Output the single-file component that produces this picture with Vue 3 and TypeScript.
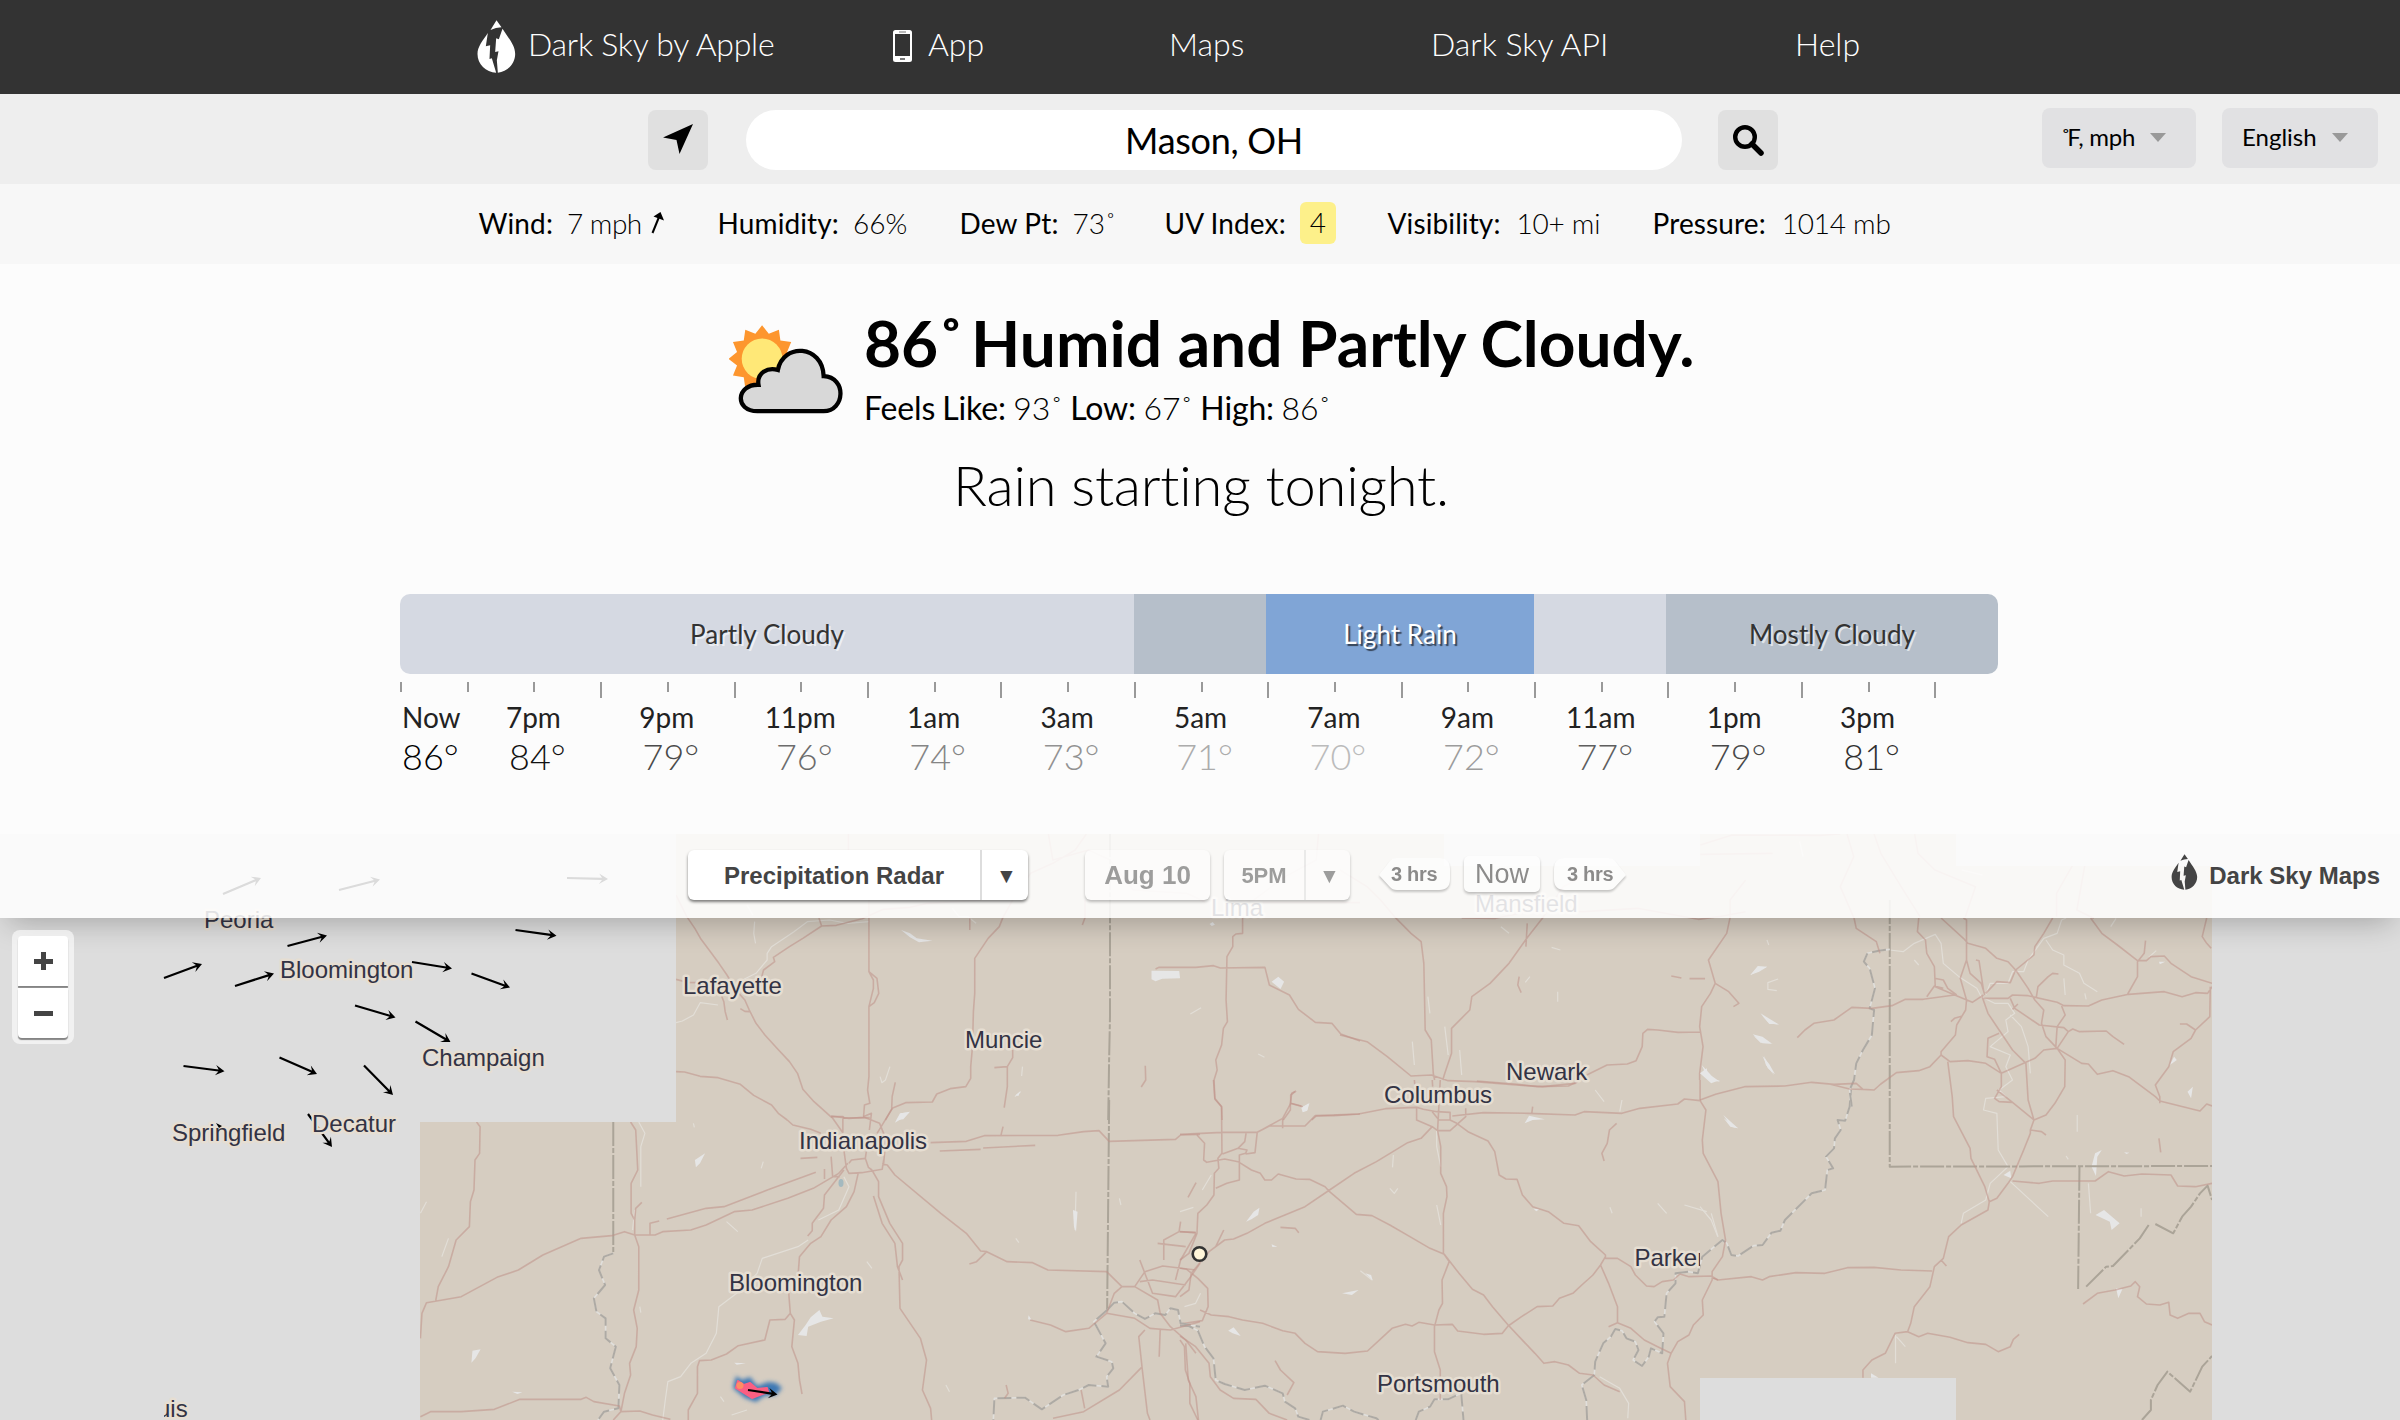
<script setup lang="ts">
interface Hour { label: string; temp: number; color: string }
interface Layer { t: string; roads: string; border?: string; river?: string; water?: string; blobs?: string }
interface City { name: string; x: number; y: number }

const details = [
  { k: 'Wind:', v: '7 mph', kind: 'wind' },
  { k: 'Humidity:', v: '66%', kind: '' },
  { k: 'Dew Pt:', v: '73˚', kind: '' },
  { k: 'UV Index:', v: '4', kind: 'uv' },
  { k: 'Visibility:', v: '10+ mi', kind: '' },
  { k: 'Pressure:', v: '1014 mb', kind: '' },
]

const hours: Hour[] = [
  { label: 'Now', temp: 86, color: '#000' },
  { label: '7pm', temp: 84, color: '#111' },
  { label: '9pm', temp: 79, color: '#4a4a4a' },
  { label: '11pm', temp: 76, color: '#6c6c6c' },
  { label: '1am', temp: 74, color: '#858585' },
  { label: '3am', temp: 73, color: '#929292' },
  { label: '5am', temp: 71, color: '#acacac' },
  { label: '7am', temp: 70, color: '#bbb' },
  { label: '9am', temp: 72, color: '#9c9c9c' },
  { label: '11am', temp: 77, color: '#5e5e5e' },
  { label: '1pm', temp: 79, color: '#484848' },
  { label: '3pm', temp: 81, color: '#303030' },
]

const layers: Layer[] = [
  {
    t: 'translate(660 820) scale(.44643 .33333)',
    roads: 'M36 225 60 290 78 325 92 358 110 390 132 430 150 465 170 510 190 540 200 570 215 610 235 645 262 685 290 725 308 760 320 808 345 845 385 893M720 240 600 250 560 262 500 268 453 296 395 316 362 318 320 355 290 380 254 412 257 425 232 450 228 470M356 294 362 318M468 240 468 455 478 480 478 505 468 560 468 770 465 810 470 850 458 855 456 890M468 455 486 475 490 520 480 548 468 560M694 295 694 330M768 293 760 320 735 355 705 415 705 520 702 575 700 680 696 740 696 775 685 800 650 806 620 822 610 846 550 848 520 865 505 900M527 787 520 830 519 865M790 690 790 713 778 740 778 800 771 863M778 740 749 743M36 478 60 487 80 488M130 500 143 545 146 575 151 600M180 566 190 574 202 575M36 755 55 756 90 769 130 773 180 793 210 826 250 855 265 880 285 900M1305 290 1305 340 1290 342 1283 350 1283 380 1270 410 1268 540 1271 605 1262 625 1258 675 1245 720 1248 750 1241 780 1243 838 1258 860 1259 900M1110 447 1118 442 1200 442 1240 437 1255 444 1355 442 1365 495 1410 525 1430 568 1468 607 1505 610 1525 642 1568 663M1087 737 1088 780 1078 801M952 240 952 293 946 315M1425 813 1415 820 1412 850 1440 860M1412 850 1412 870 1396 900M1460 900 1470 888 1510 887 1568 882M383 890 410 890 412 894 470 893M422 42 422 90M768 293 790 240 830 160 880 130 930 90 955 42M870 42 880 120 960 90 1008 120 1060 210 1180 220 1220 245M1330 240 1400 170 1470 120 1475 42M1350 248 1568 248',
    border: 'M1008 40 1008 590 1006 720 1004 900',
    water: 'M468 305 420 310 380 300 330 305 300 335 250 380 240 400 240 420 215 460 170 490M130 555 90 548 75 585 50 603 36 608M212 305 210 340 214 370M195 255 208 285M655 265 670 290 690 290 708 310M515 740 505 780 497 788 493 770M812 740 810 768M1188 582 1212 563M795 830 808 815M1340 702 1354 712',
    blobs: 'M1101 452 1163 453 1165 475 1125 476 1110 484 1101 478ZM1370 485 1385 470 1398 485 1390 507ZM540 330 560 340 575 355 610 362 580 367 560 352ZM1440 875 1437 862 1455 850 1450 870ZM530 900 540 880 560 875 545 898ZM1231 312 1238 306 1243 314 1236 318Z',
  },
  {
    t: 'translate(1340 820) scale(.67604 .33333)',
    roads: 'M0 150 40 200 60 240 82 293 105 340 120 365 124 430 126 630 135 660 138 760 140 780M380 150 330 200 300 293 278 350 250 430 222 490 195 530 192 570 165 625 165 700 155 760 152 780M277 310 275 380M265 470 263 495 268 518M600 180 577 240 577 293 572 340 545 420 555 490 548 520 535 560 532 620 537 680 532 760 532 780M555 490 575 515 590 550 582 560M533 636 500 637 470 630 455 628 448 640 447 680 438 722 425 732 395 735 365 765 348 790 300 800 260 795 200 785 160 782 135 765 105 768 70 710 40 665 0 645M180 294 230 295 290 270 360 275 440 265 530 298 560 290 600 275M490 468 505 474M517 476 540 476M533 103 640 100M533 75 580 45 710 46 740 42M750 42 760 110 740 200 760 293M790 42 800 100 830 200 858 290M850 42 855 100 880 150 940 200 925 290M1110 42 1060 220 1060 290M1110 42 1090 270 1115 295',
    water: 'M130 530 133 580M155 620 160 705M177 690 180 765M107 665 110 735M322 515 322 545M281 470 274 487M238 320 250 340M313 382 326 390M920 150 950 165M680 65 685 110',
    blobs: 'M607 465 618 438 632 440 620 455ZM622 580 648 612 635 612ZM612 648 640 672 622 668ZM627 708 642 765 630 735ZM535 735 550 768 562 785 545 780Z',
  },
  {
    t: 'translate(1180 1080) scale(.44643 .33333)',
    roads: 'M75 0 78 55 93 80 94 220 85 235 87 265 77 280 76 345 60 375 40 400 38 460 20 520 0 540M0 163 95 157 173 157 200 138 280 138 303 107 400 102 460 86 530 82 545 88 575 95M173 157 230 115 248 70 248 45 258 35M230 115 230 145M248 70 272 78M38 165 55 190 53 240 60 247 100 237 130 245 160 270 180 280 190 300 205 300 220 282 260 297 290 298 325 320 335 335 395 403 430 407 470 435 515 470 560 505 592 523M95 222 130 205 150 210 147 220 133 225 133 300 105 310 80 325M148 160 145 185 130 205M173 157 168 218 147 222M525 0 528 40M565 0 566 20M530 82 530 120 565 140 577 152 605 152 640 110 640 85M565 95 580 120 605 120 605 97 575 95M565 140 540 175 510 188 440 245 390 280 335 330 280 380 190 430 150 460 120 477 100 480 65 515 25 580 20 630 0 650M98 450 80 500M225 442 258 445 266 458M583 0 577 152 584 200 584 280 597 320 598 350 590 400 590 520 603 545 587 600 588 670 580 690 570 740 570 815 583 870 583 960M605 120 620 130 645 155 690 183 705 215 715 285 730 297 755 298 767 345 790 380 825 395 860 430 893 437 920 485 953 525 953 535 980 535 1010 560 1020 585 1045 618 1062 620 1080 605 1105 600 1120 582 1140 590 1190 588 1205 600M610 108 680 98 780 100 885 105 905 95 990 100 1030 85 1115 72 1130 57 1165 62M790 80 788 100M665 3 750 12 800 20 870 18 885 8M592 523 625 580 655 628 680 645 700 680 735 735 770 785 795 820 815 850 840 845 870 855 895 880 925 885 950 915 985 935M735 738 765 710 800 680 835 678 850 655 880 640 900 615 925 585 942 555 953 530M942 555 960 610 980 680 980 728M960 740 980 728 1010 745 1040 780 1070 800 1100 820M978 130 962 150 957 190 945 220 950 243M45 690 70 705 110 710 140 720 185 730 230 752 258 760 280 790 308 815 370 820 420 813 455 770 475 745 505 733 520 738 535 727 570 735 610 733 622 753 680 763 722 760 735 738M0 565 15 568 40 595 62 625 63 680 50 722 0 732M0 455 35 458M36 308 18 352M0 768 35 800 65 850 68 890 90 930 120 955 170 958 200 1000 240 1020M0 780 10 800 12 870 22 910 22 970 40 1020M213 842 225 870 255 908 240 945M1165 0 1165 62 1178 90 1170 180 1172 220 1205 305 1212 400 1222 480 1215 530 1192 575 1192 600 1170 660 1172 705 1150 735 1140 765 1115 785 1100 820 1092 850 1098 920 1130 965 1133 1020',
    river: 'M0 737 20 738 40 752 55 800 75 835 80 900 100 912 145 930 190 917 230 940 235 965 258 985 265 1010 290 1020M315 1020 320 995 365 977 390 995 440 1015 445 1020M528 1020 535 995 560 980 570 958 600 958 630 940 635 1020M912 1020 910 960 900 915 928 885 930 845 948 790 965 770 975 747 990 752 1000 775 1020 785 1027 810 1015 840 1035 858 1050 830 1055 805 1080 820 1083 760 1063 725 1070 712 1085 710 1090 640 1110 610 1110 580 1140 575 1160 580 1170 530 1215 480 1225 490 1235 525 1250 528 1285 497 1305 495 1325 458 1345 452 1355 420 1415 340 1445 330 1450 270 1463 265 1447 230 1465 205 1467 175 1480 150 1473 120 1490 122 1500 80 1503 30',
    water: 'M575 152 575 200 584 260M575 375 584 435M478 225 476 262M404 572 430 600M0 395 30 382M70 285 50 330M46 640 35 670 10 680M940 890 985 925 1005 970 1003 1015M1070 370 1090 400M1130 375 1180 395M1190 400 1205 470M963 382 968 400M930 30 950 65M990 60 985 95M470 325 480 340 488 325',
    blobs: 'M272 85 288 70 285 92 275 97ZM772 130 782 107 817 118 790 120ZM148 425 165 395 178 383 175 405 160 418ZM363 640 400 630 385 645ZM108 752 120 742 136 768 118 760ZM415 580 428 585 432 602ZM1217 105 1250 145 1235 140ZM205 493 218 500 207 501ZM792 386 805 388 798 394Z',
  },
  {
    t: 'translate(400 1080) scale(.5102 .33333)',
    roads: 'M150 126 157 140 156 220 147 240 145 330 138 365 136 440 110 480 95 560 75 620 70 662M40 775 43 700 52 668 120 650 190 592 232 570 280 525 355 475 415 467 440 455 460 465 500 465 515 455 570 450 600 435 655 395 690 390 760 355 810 325 860 280 878 250M523 417 600 385 635 380 720 330 815 277M490 465 490 430 508 423M452 126 462 150 466 270 453 310 453 400 460 420 460 465 468 500 468 630 458 690 465 745 463 800 450 850 452 885 440 940 433 995 418 1020M40 1010 60 995 120 995 185 988 235 958 355 958 365 952 380 965 430 978 433 995 470 993 495 1005 530 1018M474 367 462 385 460 420M759 120 770 135 805 148 825 160M845 108 880 115 910 112 940 130 948 160 952 180 948 250M845 108 868 158M868 112 868 158M908 110 924 100 920 150M965 85 935 160M1040 188 1110 184 1145 167 1290 166 1340 155 1370 152 1390 184 1520 178 1530 165 1568 163M1058 213 1138 208M1143 204 1245 196M1182 140 1178 165M785 235 818 232M845 230 848 290 862 290M832 267 832 297M870 210 875 265 880 280 905 278 945 268 948 240M880 250 885 240 912 235 914 215M912 235 918 262 925 270M898 280 890 335 875 380 845 420 825 470 805 490 783 530 780 590 762 640 765 700 755 718 725 720 715 780 663 797 640 822 610 840 587 842 583 860 583 940 565 990 565 1020M870 270 832 345 830 385 808 430 808 452 799 468M765 700 773 720 768 800 780 850 783 900 788 942M925 270 938 305 938 350 960 430 985 490 985 540 978 560 980 685 1020 775 1032 840 1024 930 1040 985 1042 1020M928 348 945 430 970 490 975 560 985 600M945 252 955 255 970 285 1060 400 1110 460 1138 513 1150 515 1190 545 1240 548 1270 570 1385 575 1415 620 1440 620M1150 515 1130 545 1116 552M1440 620 1460 575 1495 558 1560 570M1450 605 1475 600 1540 615M1440 620 1485 660 1490 700 1510 740 1540 780 1560 820M1450 540 1465 600 1475 640 1520 650 1550 590 1568 550M1385 700 1440 715 1470 745 1510 750 1568 725M1490 750 1488 830M1460 750 1448 770 1455 870 1465 1000 1470 1020M1235 720 1275 735 1305 755 1350 745 1385 700 1400 640 1415 620M1530 425 1527 455 1497 480 1497 540M1527 455 1560 458M1485 490 1540 500M1520 600 1530 540 1560 460M1455 860 1410 930 1340 995 1280 1015M1540 790 1545 900 1560 950 1565 1020M1188 915 1192 940 1185 955M1335 930 1342 985',
    border: 'M418 126 418 520M1390 60 1386 690',
    river: 'M418 520 400 530 390 570 402 615 380 655 385 695 403 715 403 775 423 800 412 865 430 915 428 985 400 995 388 1020M1386 690 1360 725 1383 790 1365 830 1395 845 1398 865 1385 890 1388 920 1350 915 1330 930 1300 945 1258 988 1225 953 1165 955 1163 1020M1386 690 1400 668 1415 665 1440 700 1460 717 1480 700 1500 705 1510 685 1525 690 1530 730 1568 740',
    water: 'M468 126 480 160 472 200 472 320M460 390 456 450M870 290 880 320 860 390 820 420M800 480 780 500 710 535 700 580 660 640 625 680 620 760 600 820 570 850 550 890 525 905 520 960 515 1020M650 1005 680 990M40 400 52 365M82 530 95 475M1325 335 1323 450M1410 355 1413 375M640 425 662 455M712 245 708 265M915 545 925 565M575 130 577 142M470 680 472 698M1207 475 1213 488M1070 915 1077 935M628 950 635 965',
    blobs: 'M580 262 578 240 598 220 588 250ZM970 128 980 100 998 97 985 115ZM780 765 795 735 805 712 822 690 828 710 850 715 825 725 800 740 797 768ZM140 848 142 812 158 808 148 835ZM220 935 240 937 230 942ZM655 848 678 850 660 854ZM1206 46 1216 34 1212 48ZM1319 390 1328 395 1325 455 1321 440ZM1232 706 1238 720 1231 718Z',
  },
  {
    t: 'translate(1700 900) scale(.44643 .33333)',
    roads: 'M0 600 35 583 100 560 190 558 250 547 300 553 350 550 365 568 390 570 405 552 440 518 490 512 515 500 540 465 540 455 572 405 575 375 595 330 597 300 583 235 597 180 597 60 590 54M290 552 335 567 365 568M218 413 235 390 255 370 300 360 340 322 385 325 430 317 460 298 500 298 570 285M345 54 350 85 395 125 403 160M490 54 487 95 505 120 508 160 525 200 527 260 580 290 610 307 635 285M508 290 525 258 545 265M525 235 545 240 555 265 575 285M540 54 590 115 600 130 640 145 665 175 690 185 707 210 735 265 750 300 770 330 765 370 775 410 800 445M618 180 625 182 635 270M597 180 605 220 630 250 638 285M790 54 770 100 750 140 748 165 707 210 695 248 665 245 640 280M635 295 690 295 700 285 735 287 800 307 815 317 870 318 900 300 960 283 1040 275 1080 290 1110 278 1137 280 1147 260M875 54 900 100 935 135 980 182 1000 182 1010 170 1040 168 1055 190 1100 230 1147 250M998 122 995 160 980 185 980 230 958 282M1135 54 1125 110 1135 130 1145 145M753 295 757 260 780 230 790 220 803 222M1143 260 1142 350 1110 390 1100 415 1060 455 1050 500 1020 555 1030 590 1030 610M1110 390 1090 372 1075 372M810 318 818 345 800 380 797 440M695 295 705 325 760 375 815 383 825 395 835 387 850 395 910 393 925 410 950 433M700 328 712 312M825 395 800 445M800 445 855 490 870 492 890 523 925 512 960 530 1020 590 1030 603 1120 633 1135 612 1147 618M800 445 818 480 817 560 795 610 775 645 748 660 740 690 740 700 725 750 700 830 690 850 665 895 648 905 645 930 585 975 557 1010 545 1075 525 1100 515 1160 480 1220 472 1270 465 1295 437 1300 415 1360 385 1380 365 1410 365 1433M800 445 770 450 750 475 675 520 640 490 600 482 560 485 540 465M555 485 565 590 568 650 605 745 607 775 638 860 648 905M632 290 645 340 670 390 700 450 730 490 735 600 748 660M562 365 570 355 588 348M670 400 645 415 643 470 660 478 675 520 675 560 660 595 670 605 700 607M665 570 700 607 748 660M740 690 765 695 775 705M700 843 760 850 790 843 885 843 915 815 950 828 990 822 1055 825 1070 858 1110 860 1147 850M30 1135 40 1140 115 1130 140 1140 155 1130 215 1118 280 1120 330 1103 390 1102 450 1110 520 1113M540 1080 552 1098M465 1295 490 1310 510 1300 560 1312 600 1328 640 1333 668 1355 695 1340 702 1318 715 1303M858 1212 890 1180 930 1170 965 1158 975 1145 985 1160 980 1190 1000 1212 1030 1215 1050 1207 1053 1245 1070 1255 1095 1240 1120 1240 1130 1265 1147 1275M1028 715 1032 757',
    border: 'M425 0 425 800 1147 798M850 800 847 1167M865 1160 910 1100 925 1098 960 1050 985 1015 1005 975M1020 972 1060 1000 1080 950 1100 920 1120 880 1137 857 1147 900M990 1560 1010 1530 1010 1500 1025 1455 1047 1415 1098 1475 1125 1400 1147 1368',
    river: 'M340 620 335 570 345 540 350 490 365 450 385 405 390 330 380 325 392 265 380 205 367 185 375 160 400 152 425 148',
    water: 'M425 150 455 155 480 130 527 103 540 130 545 190 580 230 620 265 630 290 660 310 690 310 705 340 685 360 690 395 650 440 695 465 685 500 700 540 670 570 685 590 640 595 635 630 665 640 668 750 690 800 650 850 640 900 590 940 585 970M640 285 650 250 690 250 700 215 725 215 735 180 770 115 800 100 810 60 820 54M775 120 790 150 815 165 815 195 850 220 860 250 890 275M695 345 720 380 735 440 740 520M695 845 780 950M175 237 152 248 152 268 172 272M150 120 154 135M815 235 818 285M480 180 490 195M862 280 865 298M920 80 932 55M1005 172 1022 152M988 925 988 950M870 850 875 940M845 645 845 695M438 1305 438 1390M440 1310 460 1340M0 920 25 960 40 1010M820 768 825 778',
    blobs: 'M113 225 128 203 150 200 130 213ZM138 345 155 362 178 375 155 370ZM118 403 140 410 160 430 140 430ZM140 468 155 492 168 523 152 505ZM0 520 15 505 20 540 45 540 25 550ZM53 655 85 685 68 680ZM886 945 905 930 940 970 922 990 918 965ZM877 800 885 760 900 750 890 770 887 828ZM932 1165 946 1168 937 1195ZM1052 495 1062 470 1068 480 1058 490ZM1092 575 1104 560 1100 595ZM1028 185 1042 185 1030 193ZM680 825 695 812 697 835ZM950 757 962 758 955 762ZM383 1420 400 1433 383 1433Z',
  },
]

const cities: City[] = [
  { name: 'Peoria', x: 204, y: 928 },
  { name: 'Bloomington', x: 280, y: 978 },
  { name: 'Champaign', x: 422, y: 1066 },
  { name: 'Springfield', x: 172, y: 1141 },
  { name: 'Decatur', x: 312, y: 1132 },
  { name: 'Lafayette', x: 683, y: 994 },
  { name: 'Muncie', x: 965, y: 1048 },
  { name: 'Lima', x: 1211, y: 916 },
  { name: 'Mansfield', x: 1475, y: 912 },
  { name: 'Newark', x: 1506, y: 1080 },
  { name: 'Columbus', x: 1384, y: 1103 },
  { name: 'Indianapolis', x: 799, y: 1149 },
  { name: 'Bloomington', x: 729, y: 1291 },
  { name: 'Portsmouth', x: 1377, y: 1392 },
]

// tail x, tail y, head x, head y
const winds: number[][] = [
  [223, 894, 261, 878], [339, 890, 380, 879.5], [567, 878, 608, 879],
  [287.5, 946, 327, 935.5], [164, 978, 202, 964], [235, 986, 274, 973.5],
  [412, 962, 452, 968.5], [471.5, 973.5, 510, 987.5], [515.5, 930, 556.5, 935.8],
  [355, 1005.5, 395.5, 1017.5], [415.5, 1021.5, 450.5, 1042], [183.5, 1066, 224.5, 1071.3],
  [279.5, 1057.5, 317, 1074], [364, 1065.5, 393, 1095], [308, 1114, 332, 1147],
  [748, 1390, 777.5, 1394.5],
]

function windPath(w: number[]): string {
  const [x1, y1, x2, y2] = w
  const len = Math.hypot(x2 - x1, y2 - y1)
  return `M${-len} -1.1H-6L-9 -5.2L0 0L-9 5.2L-6 1.1H${-len}Z`
}
function windTransform(w: number[]): string {
  const [x1, y1, x2, y2] = w
  return `translate(${x2} ${y2}) rotate(${(Math.atan2(y2 - y1, x2 - x1) * 180) / Math.PI})`
}

const sun = Array.from({ length: 24 }, (_, i) => {
  const r = i % 2 ? 25.5 : 33
  const a = (i * Math.PI) / 12
  return `${(32.5 + r * Math.sin(a)).toFixed(1)},${(34 - r * Math.cos(a)).toFixed(1)}`
}).join(' ')
</script>

<template>
  <div class="page">
    <nav class="nav">
      <a class="brand">
        <svg class="drop" viewBox="22 29 116 159"><path d="M80 30 95 51Q78 52 62 59ZM54 68C40 90 23 108 23 131 23 162 48 186 79 187L66 144 59 146 61 105 48 108ZM98 55C115 82 136 105 136 131 136 160 112 185 84 187L81 150 86 123 76 125 79 84 87 87Z" /></svg>
        <span>Dark Sky by Apple</span>
      </a>
      <a class="app">
        <svg class="phone" viewBox="0 0 19 32"><path fill-rule="evenodd" d="M2.500 0h14Q19 0 19 2.500v27Q19 32 16.500 32h-14Q0 32 0 29.500v-27Q0 0 2.500 0ZM2 4v22h15V4Z" /><path class="dim" d="M7 28h5v2H7zM6 1.500h7v1H6z" /></svg>
        <span>App</span>
      </a>
      <a>Maps</a>
      <a>Dark Sky API</a>
      <a>Help</a>
    </nav>

    <div class="search">
      <button class="sq"><svg viewBox="0 0 60 60"><path d="M45 14 15 27.500 28.500 30 31.500 44Z" /></svg></button>
      <div class="field">Mason, OH</div>
      <button class="sq"><svg viewBox="0 0 60 60"><circle cx="27" cy="27" r="9.800" /><path class="handle" d="M34 34 43 43" /></svg></button>
      <div class="select units"><span><u>˚</u>F, mph</span><i></i></div>
      <div class="select lang"><span>English</span><i></i></div>
    </div>

    <div class="details">
      <div v-for="d in details" :key="d.k" class="detail">
        <b>{{ d.k }}</b><span :class="{ uv: d.kind === 'uv' }">{{ d.v }}</span>
        <svg v-if="d.kind === 'wind'" viewBox="0 0 13 22"><path d="M1.500 21 8 5" /><path class="tip" d="M9.500 0 13 8.500 2.500 4.500Z" /></svg>
      </div>
    </div>

    <main class="main">
      <div class="current">
        <svg class="sky" viewBox="0 0 112 90">
          <polygon :points="sun" fill="#fd962e" />
          <circle cx="32.500" cy="34" r="20" fill="#ffe877" />
          <path d="M28 85.500C5 85.500 7 59 29 59.500 27 48 38 42 48 45 53 18 92 20 93 51 116 52 114 85.500 93 85.500Z" fill="#d8d8d8" stroke="#000" stroke-width="4.200" />
        </svg>
        <div>
          <h1>86<u>˚</u> Humid and Partly Cloudy.</h1>
          <p class="feels"><b>Feels Like:</b> 93<u>˚</u> <b>Low:</b> 67<u>˚</u> <b>High:</b> 86<u>˚</u></p>
        </div>
      </div>
      <p class="summary">Rain starting tonight.</p>

      <section class="timeline">
        <div class="bar">
          <span class="pc">Partly Cloudy</span><span class="mc"></span><span class="rain">Light Rain</span><span class="pc"></span><span class="mc">Mostly Cloudy</span>
        </div>
        <div class="ticks"><i v-for="n in 24" :key="n" :class="{ long: n > 3 && n % 2 === 0 }"></i></div>
        <div class="hours">
          <div v-for="h in hours" :key="h.label" class="hour">
            <span>{{ h.label }}</span>
            <em :style="{ color: h.color }">{{ h.temp }}°</em>
          </div>
        </div>
      </section>
    </main>

    <section class="map">
      <svg class="canvas" viewBox="0 834 2400 586">
        <defs>
          <clipPath id="land"><path d="M676 834H1444V866H1700V834H1956V866H2212V1420H1956V1378H1700V1420H420V1122H676Z" /></clipPath>
          <clipPath id="east"><rect x="1600" y="1200" width="100" height="100" /></clipPath>
          <clipPath id="west"><rect x="164" y="1380" width="60" height="40" /></clipPath>
          <filter id="soft" x="-30%" y="-30%" width="160%" height="160%"><feGaussianBlur stdDeviation="2.200" /></filter>
        </defs>
        <rect y="834" width="2400" height="586" fill="#ddd" />
        <g clip-path="url(#land)">
          <rect y="834" width="2400" height="586" fill="#d6cdc1" />
          <g v-for="(l, i) in layers" :key="i" :transform="l.t">
            <path v-if="l.water" class="water" :d="l.water" />
            <path v-if="l.blobs" class="blob" :d="l.blobs" />
            <path v-if="l.border" class="border" :d="l.border" />
            <path v-if="l.river" class="bank" :d="l.river" />
            <path v-if="l.river" class="river" :d="l.river" />
            <path class="road" :d="l.roads" />
          </g>
        </g>
        <path d="M733 1388 736 1376 742 1380 750 1377 757 1386 768 1382 776 1383 782 1388 776 1395 764 1396 756 1402 745 1398Z" fill="#3c78b4" filter="url(#soft)" />
        <path d="M736 1388 738 1381 744 1385 750 1383 757 1389 767 1388 768 1392 757 1396 752 1398Z" fill="#fb5f82" stroke="#fb5f82" stroke-width="2" stroke-linejoin="round" />
        <circle cx="740" cy="1385.500" r="3.500" fill="#ff8d63" />
        <ellipse cx="841" cy="1183" rx="2.500" ry="4" fill="#8fb0bd" opacity=".7" />
        <path v-for="(w, i) in winds" :key="i" :d="windPath(w)" :transform="windTransform(w)" />
        <text v-for="c in cities" :key="c.name + c.x" class="city" :x="c.x" :y="c.y">{{ c.name }}</text>
        <path d="M216 1123 222 1126 219 1128Z" />
        <g clip-path="url(#east)"><text class="city" x="1634.500" y="1266">Parker</text></g>
        <g clip-path="url(#west)"><text class="city" x="157" y="1417">uis</text></g>
        <circle cx="1199.500" cy="1254" r="6.800" fill="#fff6d9" stroke="#333" stroke-width="2.600" />
      </svg>

      <div class="toolbar">
        <div class="split radar"><span>Precipitation Radar</span><span>▼</span></div>
        <div class="split date"><span>Aug 10</span></div>
        <div class="split time"><span>5PM</span><span>▼</span></div>
        <svg class="step back" viewBox="0 0 72 36"><path d="M0 17 11 3Q13.500 0 18 0H60Q71 0 71 11V21Q71 32 60 32H18Q13.500 32 11 29Z" /><text x="12" y="23">3 hrs</text></svg>
        <div class="now">Now</div>
        <svg class="step fwd" viewBox="0 0 72 36"><path d="M72 17 61 3Q58.500 0 54 0H11Q0 0 0 11V21Q0 32 11 32H54Q58.500 32 61 29Z" /><text x="13" y="23">3 hrs</text></svg>
        <div class="logo">
          <svg viewBox="22 29 116 159"><path d="M80 30 95 51Q78 52 62 59ZM54 68C40 90 23 108 23 131 23 162 48 186 79 187L66 144 59 146 61 105 48 108ZM98 55C115 82 136 105 136 131 136 160 112 185 84 187L81 150 86 123 76 125 79 84 87 87Z" /></svg>
          <span>Dark Sky Maps</span>
        </div>
      </div>
      <div class="zoom"><button><i class="plus"></i></button><button><i></i></button></div>
    </section>
  </div>
</template>

<style>
body { margin: 0; }
</style>

<style scoped>
.page { width: 2400px; height: 1420px; overflow: hidden; background: #fcfcfc; font-family: Lato, sans-serif; font-variant-ligatures: none; color: #000; display: flex; flex-direction: column; }
h1, p { margin: 0; }
button { border: 0; padding: 0; }
u { text-decoration: none; margin-right: -.13em; }

.nav { height: 94px; flex: none; background: #333; color: #fff; font-weight: 300; font-size: 32px; line-height: 87px; display: grid; grid-template-columns: 416px 276px 262px 364px 200px; padding-left: 477px; box-sizing: border-box; white-space: nowrap; }
.brand, .app { display: flex; }
.brand span { letter-spacing: -.25px; }
.drop { width: 39px; height: 53px; margin: 20px 12px 0 0; fill: #fff; }
.phone { width: 19px; height: 32px; margin: 30px 16px 0 0; fill: #fff; }
.phone .dim { fill: #777; }

.search { height: 90px; flex: none; background: #eee; display: flex; padding: 16px 22px 0 648px; box-sizing: border-box; }
.sq { width: 60px; height: 60px; border-radius: 8px; background: #e0e0e0; }
.sq svg { width: 60px; height: 60px; display: block; }
.sq circle { fill: none; stroke: #000; stroke-width: 4.4; }
.sq .handle { stroke: #000; stroke-width: 5.5; stroke-linecap: round; }
.field { width: 936px; height: 60px; margin: 0 36px 0 38px; border-radius: 30px; background: #fff; text-align: center; font-size: 36px; letter-spacing: -.3px; line-height: 60px; }
.select { height: 60px; margin-top: -2px; border-radius: 8px; background: #e1e1e3; display: flex; align-items: center; font-size: 24px; line-height: 54px; box-sizing: border-box; padding: 0 30px 2px 20px; justify-content: space-between; white-space: nowrap; }
.select i { border: 8px solid transparent; border-top: 9px solid #999; border-bottom: 0; }
.units { width: 154px; margin-left: auto; padding-left: 19px; }
.units span { letter-spacing: -.3px; }
.lang { width: 156px; margin-left: 26px; }

.details { height: 80px; flex: none; background: #f7f7f7; display: grid; grid-template-columns: 239px 242px 205px 223px 265px 260px; padding-left: 478.500px; font-size: 28px; line-height: 78px; white-space: nowrap; }
.detail { display: flex; font-weight: 300; }
.detail b { font-weight: 400; letter-spacing: .12px; margin-right: 14px; }
.detail:first-child span { letter-spacing: -.5px; }
.detail:nth-child(n + 5) b { margin-right: 16px; }
.detail:nth-child(n + 5) span { letter-spacing: -.25px; }
.detail svg { width: 13px; height: 22px; margin: 28px 0 0 9px; overflow: visible; }
.detail path { stroke: #000; stroke-width: 2; fill: none; }
.detail .tip { fill: #000; stroke: none; }
.detail .uv { background: #fdf08a; width: 36px; height: 42px; line-height: 41px; border-radius: 6px; margin-top: 18px; text-align: center; }

.main { height: 570px; flex: none; display: flex; flex-direction: column; }
.current { display: flex; padding: 40px 0 0 729px; height: 128px; }
.sky { width: 114px; height: 92px; margin: 20px 21px 0 0; }
h1 { font-size: 64px; font-weight: 700; line-height: 78px; white-space: nowrap; }
.feels { font-size: 32px; line-height: 51px; font-weight: 300; white-space: nowrap; letter-spacing: -.15px; word-spacing: -1px; }
.feels b { font-weight: 400; }
.feels b + u + b { margin-left: 4px; }
.feels u + b { margin-left: 4px; }
.summary { font-size: 56px; font-weight: 300; line-height: 106px; text-align: center; padding-left: 2px; letter-spacing: -.2px; }

.timeline { width: 1598px; margin: 56px 0 0 400px; }
.bar { height: 80px; display: flex; border-radius: 10px; overflow: hidden; font-size: 26px; letter-spacing: .05px; line-height: 80px; text-align: center; color: #333; text-shadow: 2px 2px 0 rgba(255, 255, 255, .6); }
.pc { background: #d5d9e2; }
.mc { background: #b6bfca; }
.bar span:nth-child(1) { width: 734px; }
.bar span:nth-child(2) { width: 132px; }
.bar span:nth-child(3) { width: 268px; }
.bar span:nth-child(4) { width: 132px; }
.bar span:nth-child(5) { width: 332px; }
.rain { background: #80a5d6; color: #fff; text-shadow: 2px 2px 1px rgba(0, 0, 0, .6); }
.ticks { display: grid; grid-template-columns: repeat(24, 1fr); width: 1601px; margin-top: 8px; height: 16px; }
.ticks i { height: 10px; border-left: 2px solid #999; }
.ticks .long { height: 16px; }
.hours { display: grid; grid-template-columns: repeat(24, 1fr); width: 1601px; }
.hour { grid-column: span 2; text-align: center; font-size: 28px; line-height: 38px; color: #222; }
.hour:first-child { grid-column: span 1; text-align: left; padding-left: 2px; }
.hour span, .hour em { display: block; }
.hour em { font-style: normal; font-weight: 300; font-size: 36px; line-height: 40px; padding-left: 8px; }
.hour:first-child em { padding-left: 0; }

.map { position: relative; height: 586px; flex: none; overflow: hidden; font-family: "Liberation Sans", Arial, sans-serif; }
.canvas { display: block; width: 2400px; height: 586px; }
.road, .border, .river, .bank, .water { fill: none; vector-effect: non-scaling-stroke; stroke-linejoin: round; }
.road { stroke: #bf9289; stroke-opacity: .55; stroke-width: 1.6; }
.border { stroke: #aba498; stroke-width: 2; stroke-dasharray: 24 2 5 2; }
.bank { stroke: #e0dfdc; stroke-width: 1.6; }
.river { stroke: #aeaaa4; stroke-width: 2; stroke-dasharray: 14 5; }
.water { stroke: #e2ded7; stroke-width: 1.2; }
.blob { fill: #e6e6e6; }
.city { font-size: 24px; fill: #334; stroke: #e6ded2; stroke-width: 5px; stroke-linejoin: round; paint-order: stroke; }

.toolbar { position: absolute; top: 0; left: 0; right: 0; height: 84px; background: rgba(255, 255, 255, .86); box-shadow: 0 12px 30px -8px rgba(0, 0, 0, .26); display: flex; padding: 16px 20px 0 688px; box-sizing: border-box; color: #444; font-weight: 700; }
.split { height: 50px; border-radius: 6px; background: #fff; box-shadow: 0 2px 3px rgba(0, 0, 0, .5); display: flex; line-height: 52px; text-align: center; white-space: nowrap; }
.split span:first-child { flex: 1; }
.split span + span { border-left: 2px solid #ddd; font-size: 21px; line-height: 51px; }
.radar { width: 340px; margin-right: 57px; font-size: 24px; }
.radar span + span { width: 49px; margin-right: -3px; }
.date, .time { opacity: .5; }
.date { width: 125px; margin-right: 14px; font-size: 26px; line-height: 50px; }
.time { width: 126px; margin-right: 29px; font-size: 22px; }
.time span + span { width: 47px; margin-right: -3px; }
.step { width: 72px; height: 36px; margin-top: 8px; overflow: visible; opacity: .6; filter: drop-shadow(0 2px 1px rgba(0, 0, 0, .35)); }
.step path { fill: #fff; }
.step text { font-size: 20px; letter-spacing: -.3px; fill: #444; }
.now { width: 76px; height: 36px; margin: 6px 14px 0 13px; border-radius: 5px; background: #fff; opacity: .6; box-shadow: 0 2px 3px rgba(0, 0, 0, .4); font-size: 27px; font-weight: 400; line-height: 36px; text-align: center; }
.logo { margin-left: auto; display: flex; font-size: 24px; line-height: 52px; white-space: nowrap; }
.logo svg { width: 27px; height: 36px; margin: 4px 11px 0 0; fill: #444; }
.zoom { position: absolute; left: 12px; top: 96px; width: 62px; height: 114px; box-sizing: border-box; padding: 6px; border-radius: 8px; background: rgba(255, 255, 255, .6); display: flex; flex-direction: column; gap: 2px; }
.zoom button { flex: 1; background: #fff; box-shadow: 0 2px 1px rgba(0, 0, 0, .45); border-radius: 4px 4px 0 0; display: flex; align-items: center; justify-content: center; }
.zoom button + button { border-radius: 0 0 4px 4px; }
.zoom i { width: 19px; height: 5px; background: #444; }
.zoom .plus { background: linear-gradient(#444, #444) center / 5px 18px no-repeat, linear-gradient(#444, #444) center / 19px 5px no-repeat; height: 18px; }
</style>
